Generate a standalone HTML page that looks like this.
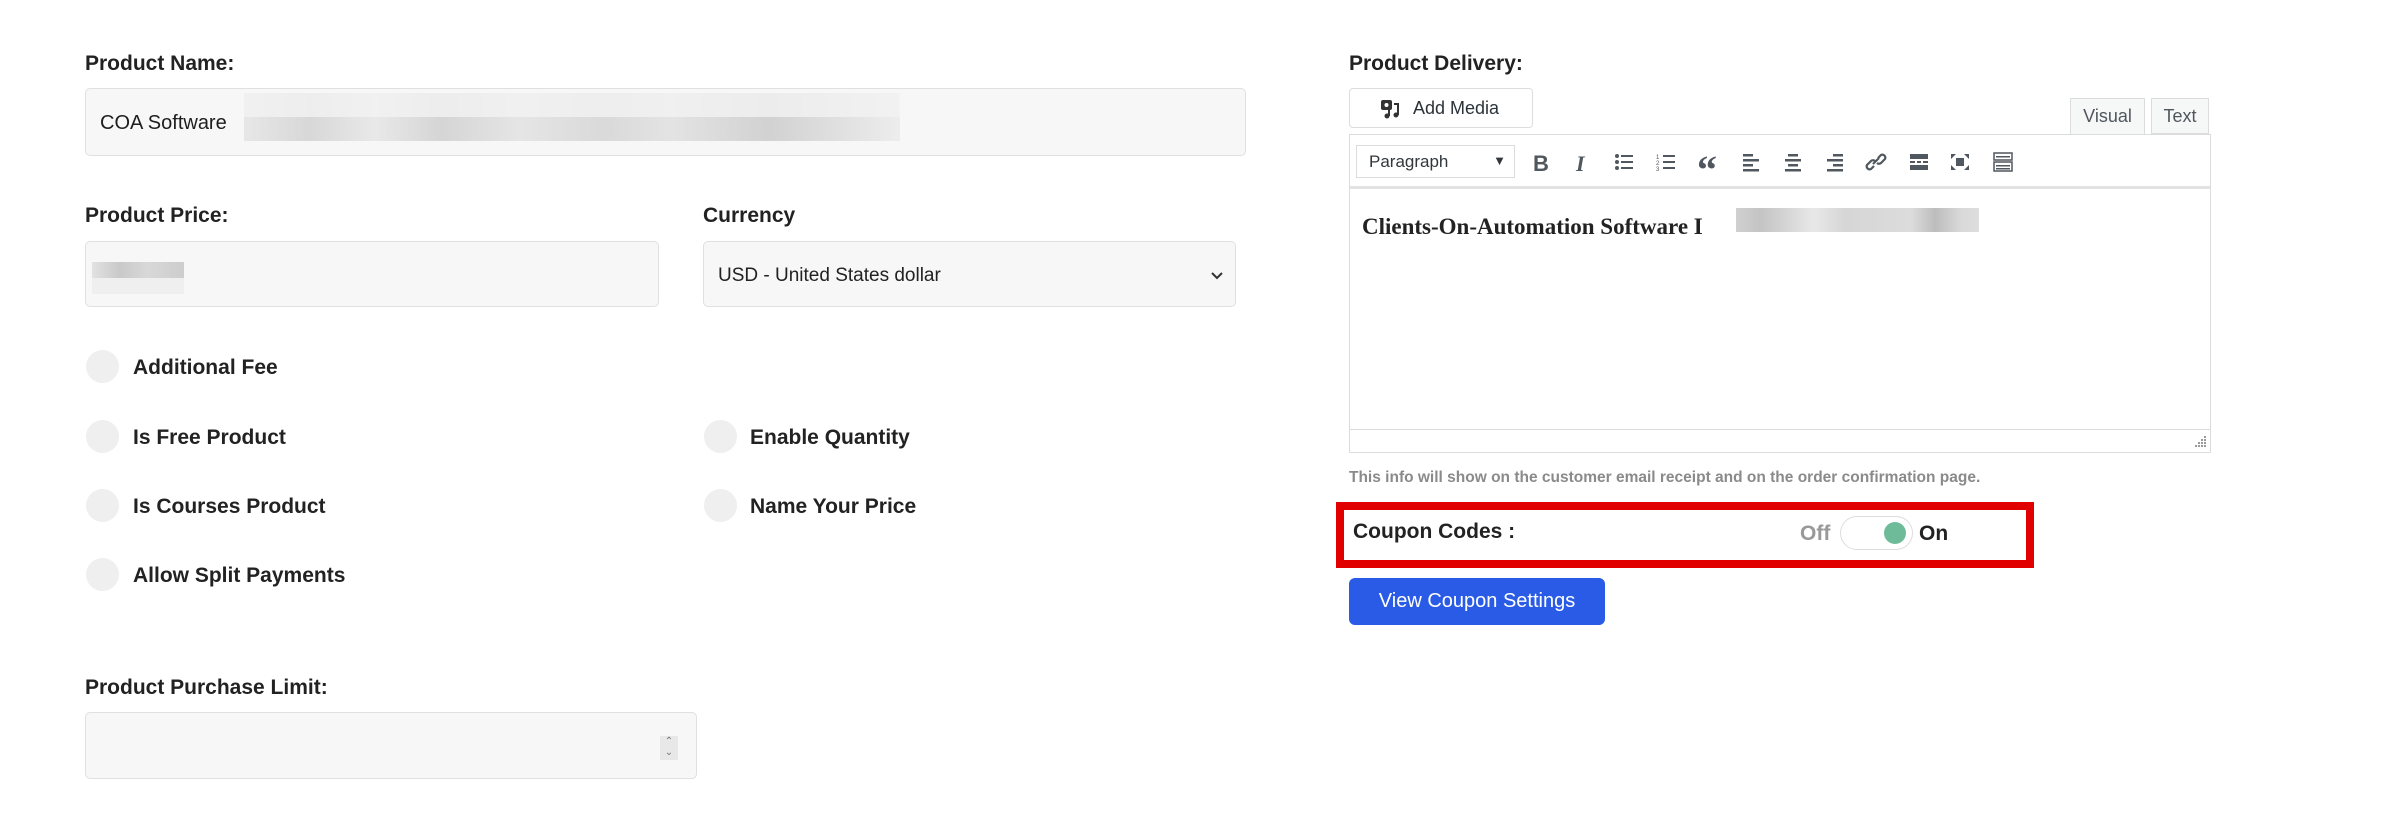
<!DOCTYPE html>
<html><head><meta charset="utf-8"><style>
*{box-sizing:border-box;margin:0;padding:0}
body{width:2392px;height:830px;background:#fff;position:relative;font-family:"Liberation Sans",sans-serif;color:#1e1e1e;overflow:hidden}
.a{position:absolute}
.lbl{font-size:21px;font-weight:bold;color:#222}
.inp{background:#f7f7f7;border:1.5px solid #e0e0e0;border-radius:5px}
.cb{width:33px;height:33px;border-radius:50%;background:#efefef}
.opt{font-size:21px;font-weight:bold;color:#222}
.ic{position:absolute;top:152px;width:22px;height:20px;fill:#50575e}
</style></head><body>

<div class="a lbl" style="left:85px;top:52px">Product Name:</div>
<div class="a inp" style="left:85px;top:88px;width:1161px;height:68px"></div>
<div class="a" style="left:100px;top:112px;font-size:20px">COA Software</div>
<div class="a" style="left:244px;top:93px;width:656px;height:48px;background:linear-gradient(90deg,#e4e4e4 0,#d2d2d2 10%,#e6e6e6 20%,#cfcfcf 30%,#e2e2e2 42%,#d4d4d4 55%,#e0e0e0 65%,#cbcbcb 80%,#dedede 92%,#ebebeb 100%);opacity:.85"></div>
<div class="a" style="left:244px;top:93px;width:656px;height:24px;background:#f2f2f2;opacity:.8"></div>

<div class="a lbl" style="left:85px;top:204px">Product Price:</div>
<div class="a lbl" style="left:703px;top:204px">Currency</div>
<div class="a inp" style="left:85px;top:241px;width:574px;height:66px"></div>
<div class="a" style="left:92px;top:262px;width:92px;height:16px;background:linear-gradient(90deg,#e2e2e2,#c9c9c9 30%,#d8d8d8 60%,#cdcdcd)"></div>
<div class="a" style="left:92px;top:278px;width:92px;height:16px;background:#efefef"></div>
<div class="a inp" style="left:703px;top:241px;width:533px;height:66px"></div>
<div class="a" style="left:718px;top:265px;font-size:19px;color:#222">USD - United States dollar</div>
<svg class="a" style="left:1210px;top:271px" width="14" height="10" viewBox="0 0 14 10"><path d="M2 2l5 5 5-5" stroke="#333" stroke-width="2" fill="none"/></svg>

<div class="a cb" style="left:86px;top:350px"></div><div class="a opt" style="left:133px;top:356px">Additional Fee</div>
<div class="a cb" style="left:86px;top:420px"></div><div class="a opt" style="left:133px;top:426px">Is Free Product</div>
<div class="a cb" style="left:86px;top:489px"></div><div class="a opt" style="left:133px;top:495px">Is Courses Product</div>
<div class="a cb" style="left:86px;top:558px"></div><div class="a opt" style="left:133px;top:564px">Allow Split Payments</div>
<div class="a cb" style="left:704px;top:420px"></div><div class="a opt" style="left:750px;top:426px">Enable Quantity</div>
<div class="a cb" style="left:704px;top:489px"></div><div class="a opt" style="left:750px;top:495px">Name Your Price</div>

<div class="a lbl" style="left:85px;top:676px">Product Purchase Limit:</div>
<div class="a inp" style="left:85px;top:712px;width:612px;height:67px"></div>
<div class="a" style="left:660px;top:736px;width:18px;height:24px;background:#e8e8e8;font-size:10px;color:#777;text-align:center;line-height:11px">&#8963;<br>&#8964;</div>

<div class="a lbl" style="left:1349px;top:52px">Product Delivery:</div>
<div class="a" style="left:1349px;top:88px;width:184px;height:40px;border:1.5px solid #ddd;border-radius:4px;background:#fff"></div>
<svg class="a" style="left:1380px;top:98px" width="22" height="22" viewBox="0 0 22 22"><rect x="1" y="2" width="11" height="10" rx="2" fill="#333"/><circle cx="6.5" cy="7" r="2" fill="#fff"/><path d="M14 6h4v11" stroke="#333" stroke-width="2" fill="none"/><circle cx="16" cy="17" r="2.5" fill="#333"/><circle cx="7" cy="18" r="2.5" fill="#333"/><path d="M9 18V11" stroke="#333" stroke-width="2"/></svg>
<div class="a" style="left:1413px;top:98px;font-size:18px;color:#2c3338">Add Media</div>
<div class="a" style="left:2070px;top:98px;width:75px;height:36px;background:#f6f7f7;border:1px solid #dcdcde;border-bottom:none;font-size:18px;color:#50575e;text-align:center;line-height:34px">Visual</div>
<div class="a" style="left:2151px;top:98px;width:58px;height:36px;background:#f6f7f7;border:1px solid #dcdcde;font-size:18px;color:#50575e;text-align:center;line-height:34px">Text</div>

<div class="a" style="left:1349px;top:134px;width:862px;height:319px;border:1.5px solid #dcdcde;background:#fff"></div>
<div class="a" style="left:1350px;top:186px;width:860px;height:3px;background:#e2e2e2"></div>
<div class="a" style="left:1350px;top:429px;width:860px;height:1px;background:#dcdcde"></div>
<div class="a" style="left:1356px;top:145px;width:159px;height:33px;border:1px solid #dcdcde;font-size:17px;color:#32373c;padding:6px 12px">Paragraph<span style="position:absolute;right:8px;top:7px;font-size:13px">&#9660;</span></div>

<div class="a" style="left:1533px;top:151px;font-size:22px;font-weight:bold;color:#50575e">B</div>
<div class="a" style="left:1576px;top:151px;font-size:22px;font-style:italic;font-family:'Liberation Serif',serif;font-weight:bold;color:#50575e">I</div>
<svg class="ic" style="left:1614px" viewBox="0 0 22 20"><circle cx="3" cy="4" r="2"/><circle cx="3" cy="10" r="2"/><circle cx="3" cy="16" r="2"/><rect x="7" y="3" width="12" height="2"/><rect x="7" y="9" width="12" height="2"/><rect x="7" y="15" width="12" height="2"/></svg>
<svg class="ic" style="left:1656px" viewBox="0 0 22 20"><text x="0" y="7" font-size="6" fill="#50575e">1</text><text x="0" y="13" font-size="6" fill="#50575e">2</text><text x="0" y="19" font-size="6" fill="#50575e">3</text><rect x="7" y="3" width="12" height="2"/><rect x="7" y="9" width="12" height="2"/><rect x="7" y="15" width="12" height="2"/></svg>
<div class="a" style="left:1697px;top:146px;font-size:40px;font-weight:bold;color:#50575e;font-family:'Liberation Serif',serif">&#8220;</div>
<svg class="ic" style="left:1740px" viewBox="0 0 22 20"><rect x="3" y="2" width="10" height="2.5"/><rect x="3" y="7" width="16" height="2.5"/><rect x="3" y="12" width="10" height="2.5"/><rect x="3" y="17" width="16" height="2.5"/></svg>
<svg class="ic" style="left:1782px" viewBox="0 0 22 20"><rect x="6" y="2" width="10" height="2.5"/><rect x="3" y="7" width="16" height="2.5"/><rect x="6" y="12" width="10" height="2.5"/><rect x="3" y="17" width="16" height="2.5"/></svg>
<svg class="ic" style="left:1824px" viewBox="0 0 22 20"><rect x="9" y="2" width="10" height="2.5"/><rect x="3" y="7" width="16" height="2.5"/><rect x="9" y="12" width="10" height="2.5"/><rect x="3" y="17" width="16" height="2.5"/></svg>
<svg class="ic" style="left:1865px" viewBox="0 0 22 20"><path d="M9 14l-3 3a3 3 0 0 1-4-4l4-4a3 3 0 0 1 4 0M13 6l3-3a3 3 0 0 1 4 4l-4 4a3 3 0 0 1-4 0M8 12l6-6" stroke="#50575e" stroke-width="2.2" fill="none"/></svg>
<svg class="ic" style="left:1908px" viewBox="0 0 22 20"><rect x="2" y="2" width="18" height="5"/><rect x="2" y="9" width="5" height="2"/><rect x="9" y="9" width="4" height="2"/><rect x="15" y="9" width="5" height="2"/><rect x="2" y="13" width="18" height="5"/></svg>
<svg class="ic" style="left:1949px" viewBox="0 0 22 20"><path d="M2 2h5L2 7zM20 2h-5l5 5zM2 18h5l-5-5zM20 18h-5l5-5z"/><rect x="7" y="6" width="8" height="8"/></svg>
<svg class="ic" style="left:1992px" viewBox="0 0 22 20"><rect x="2" y="1" width="18" height="7" fill="none" stroke="#50575e" stroke-width="1.5"/><rect x="2" y="10" width="18" height="9" fill="none" stroke="#50575e" stroke-width="1.5"/><rect x="4" y="4" width="14" height="1.5"/><rect x="4" y="13" width="14" height="1.5"/><rect x="4" y="16" width="14" height="1.5"/></svg>

<div class="a" style="left:1362px;top:214px;font-size:23px;font-weight:bold;font-family:'Liberation Serif',serif;color:#222">Clients-On-Automation Software I</div>
<div class="a" style="left:1736px;top:208px;width:243px;height:24px;background:linear-gradient(90deg,#d0d0d0 0,#c4c4c4 10%,#d4d4d4 20%,#e8e8e8 32%,#d6d6d6 45%,#d9d9d9 60%,#dcdcdc 72%,#bdbdbd 82%,#d8d8d8 92%,#dedede)"></div>
<svg class="a" style="left:2193px;top:436px" width="14" height="12"><g fill="#999"><rect x="11" y="0" width="2" height="2"/><rect x="8" y="3" width="2" height="2"/><rect x="11" y="3" width="2" height="2"/><rect x="5" y="6" width="2" height="2"/><rect x="8" y="6" width="2" height="2"/><rect x="11" y="6" width="2" height="2"/><rect x="2" y="9" width="2" height="2"/><rect x="5" y="9" width="2" height="2"/><rect x="8" y="9" width="2" height="2"/><rect x="11" y="9" width="2" height="2"/></g></svg>

<div class="a" style="left:1349px;top:469px;font-size:15.5px;font-weight:bold;color:#8a8a8a">This info will show on the customer email receipt and on the order confirmation page.</div>

<div class="a" style="left:1336px;top:502px;width:698px;height:66px;border:8px solid #e00000"></div>
<div class="a" style="left:1353px;top:520px;font-size:21px;font-weight:bold;color:#222">Coupon Codes :</div>
<div class="a" style="left:1800px;top:522px;font-size:21px;font-weight:bold;color:#999">Off</div>
<div class="a" style="left:1840px;top:516px;width:73px;height:34px;border:1.5px solid #ddd;border-radius:17px;background:#fff"></div>
<div class="a" style="left:1884px;top:522px;width:22px;height:22px;border-radius:50%;background:#6dbb98"></div>
<div class="a" style="left:1919px;top:522px;font-size:21px;font-weight:bold;color:#222">On</div>

<div class="a" style="left:1349px;top:578px;width:256px;height:47px;background:#2a5be6;border-radius:6px;color:#fff;font-size:20px;text-align:center;line-height:47px">View Coupon Settings</div>

</body></html>
